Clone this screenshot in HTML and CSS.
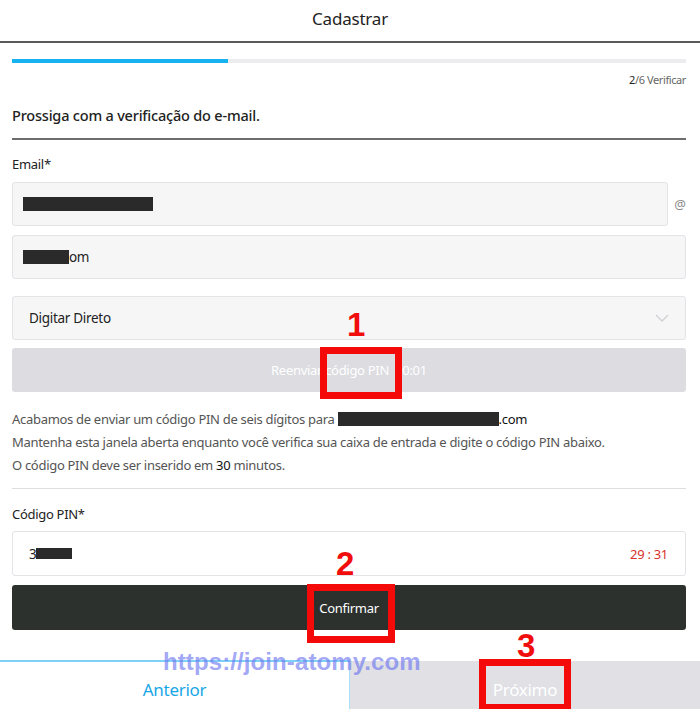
FILE: index.html
```html
<!DOCTYPE html>
<html lang="pt">
<head>
<meta charset="utf-8">
<title>Cadastrar</title>
<link rel="stylesheet" href="styles.css">
</head>
<body>
<div class="page">
  <header class="header"><h1 class="title">Cadastrar</h1></header>
  <main class="main">
    <div class="progress"><div class="progress-fill"></div></div>
    <div class="step"><b>2</b>/6 Verificar</div>
    <h2 class="heading">Prossiga com a verificação do e-mail.</h2>
    <div class="label label-email">Email*</div>
    <div class="email-row">
      <div class="field field-grey"><span class="redact r1"></span></div>
      <span class="at">@</span>
    </div>
    <div class="field field-grey field-second"><span class="redact r2"></span><span class="val">om</span></div>
    <div class="field field-grey field-select">
      <span class="val">Digitar Direto</span>
      <svg class="chev" width="14" height="9" viewBox="0 0 14 9"><path d="M1 1 L7 7 L13 1" fill="none" stroke="#cfcfd4" stroke-width="1.3"/></svg>
    </div>
    <div class="btn btn-resend">Reenviar código PIN&nbsp; 00:01</div>
    <div class="info">
      <p>Acabamos de enviar um código PIN de seis dígitos para <span class="redact r3"></span><span class="dark">.com</span></p>
      <p>Mantenha esta janela aberta enquanto você verifica sua caixa de entrada e digite o código PIN abaixo.</p>
      <p>O código PIN deve ser inserido em <span class="dark">30</span> minutos.</p>
    </div>
    <div class="label label-pin">Código PIN*</div>
    <div class="field field-white">
      <span class="val">3</span><span class="redact r4"></span>
      <span class="timer">29 : 31</span>
    </div>
    <div class="btn btn-confirm">Confirmar</div>
  </main>
  <footer class="footer">
    <div class="nav nav-prev">Anterior</div>
    <div class="nav nav-next">Próximo</div>
  </footer>

  <div class="watermark">https://join-atomy.com</div>
  <div class="mark num n1">1</div>
  <div class="mark num n2">2</div>
  <div class="mark num n3">3</div>
  <div class="mark box b1"></div>
  <div class="mark box b2"></div>
  <div class="mark box b3"></div>
</div>
</body>
</html>
```

FILE: styles.css
```css
* { box-sizing: border-box; }
html, body { margin: 0; padding: 0; background: #fff; }
body { font-family: "Noto Sans", "Open Sans", sans-serif; color: #222; }
.page { position: relative; width: 700px; height: 709px; overflow: hidden; }

.header { height: 43px; border-bottom: 2px solid #5a5a5a; display: flex; align-items: center; justify-content: center; }
.title { margin: 0; font-size: 17px; font-weight: 400; color: #222; letter-spacing: -0.2px; padding-bottom: 4px; }

.main { padding: 0 14px 0 12px; }
.progress { margin-top: 16px; height: 4px; background: #ececee; }
.progress-fill { width: 216px; height: 4px; background: #17b3f0; }
.step { margin-top: 9px; text-align: right; font-size: 11px; color: #666; letter-spacing: -0.4px; line-height: 16px; }
.step b { font-weight: 400; color: #222; }
.heading { margin: 17px 0 0; font-size: 14.5px; font-weight: 500; color: #222; letter-spacing: -0.2px; line-height: 20px; padding-bottom: 13px; border-bottom: 2px solid #6d6d6d; }

.label { font-size: 13px; color: #222; letter-spacing: -0.3px; line-height: 18px; }
.label-email { margin-top: 15px; }
.label-pin { margin-top: 16px; }

.field { height: 44px; border: 1px solid #e3e3e8; border-radius: 3px; display: flex; align-items: center; padding: 0 10px; font-size: 13.5px; color: #222; letter-spacing: -0.3px; }
.field-grey { background: #f6f6f7; }
.field-white { background: #fff; height: 45px; margin-top: 8px; padding: 0 17px 0 16px; }
.email-row { display: flex; align-items: center; margin-top: 9px; gap: 6px; }
.email-row .field { flex: 1; }
.at { font-size: 13px; color: #888; width: 12px; text-align: right; }
.field-second { margin-top: 9px; padding-left: 10px; }
.field-select { margin-top: 17px; padding: 0 16px; justify-content: space-between; }

.redact { display: inline-block; background: #2a2a2a; height: 14px; }
.r1 { width: 130px; }
.r2 { width: 46px; }
.r3 { width: 161px; height: 14px; vertical-align: -2px; }
.r4 { width: 36px; height: 11px; }
.timer { margin-left: auto; color: #d8322b; font-size: 13px; }

.btn { height: 44px; border-radius: 3px; display: flex; align-items: center; justify-content: center; font-size: 13px; letter-spacing: -0.3px; }
.btn-resend { margin-top: 8px; background: #dcdce1; color: #fff; }
.btn-confirm { margin-top: 9px; height: 45px; background: #2c312e; color: #fff; }

.info { margin-top: 16px; padding-bottom: 11px; border-bottom: 1px solid #dedede; }
.info p { margin: 0; font-size: 13px; line-height: 23px; color: #555; letter-spacing: -0.3px; }
.info .dark { color: #111; }

.footer { margin-top: 30px; display: flex; height: 50px; }
.nav { flex: 1; display: flex; align-items: center; justify-content: center; font-size: 17px; letter-spacing: -0.3px; padding-top: 7px; }
.nav-prev { border-top: 2px solid #7fd1f6; border-right: 1px solid #a9e0f8; color: #18a7e6; flex: 0 0 350px; }
.nav-next { background: #e0e0e5; color: #fff; margin-top: 1px; }

.watermark { position: absolute; left: 163px; top: 648px; font-family: "Liberation Sans", Arial, sans-serif; font-weight: 700; font-size: 24px; color: rgba(110, 118, 240, 0.65); letter-spacing: 0.1px; }

.mark { position: absolute; }
.num { font-family: "Liberation Sans", Arial, sans-serif; font-weight: 700; font-size: 33px; color: #f20d0d; line-height: 1; }
.n1 { left: 347px; top: 308px; }
.n2 { left: 336px; top: 547px; }
.n3 { left: 517px; top: 629px; }
.box { border: 7px solid #f50a0a; }
.b1 { left: 320px; top: 347px; width: 82px; height: 52px; }
.b2 { left: 307px; top: 584px; width: 88px; height: 59px; }
.b3 { left: 479px; top: 659px; width: 92px; height: 52px; }
```
